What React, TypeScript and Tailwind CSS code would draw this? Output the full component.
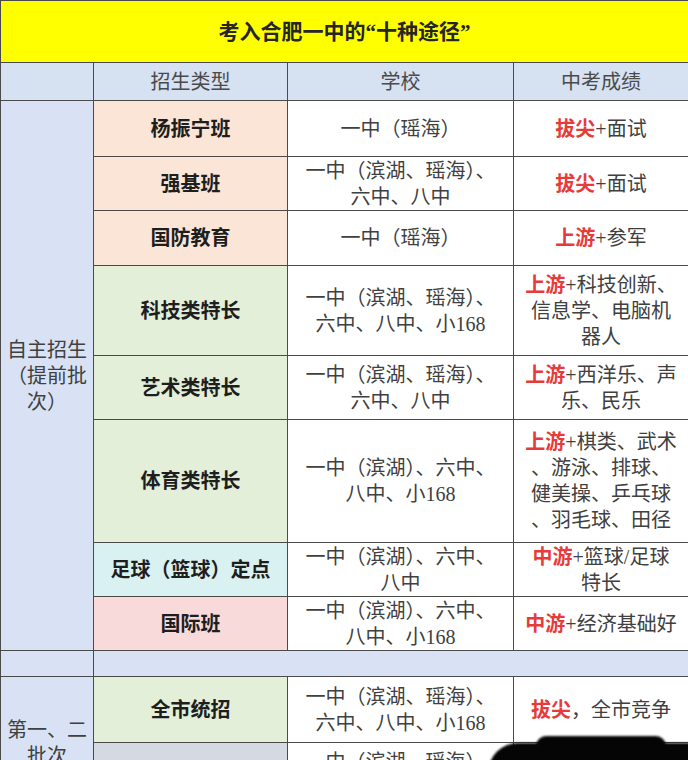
const FONT = { fontFamily: '"Liberation Serif", "Noto Sans CJK SC", serif' };

type Row = {
  kind: string;
  bg: string;
  h: string;
  school: React.ReactNode;
  red: string;
  rest: React.ReactNode;
};

const rows: Row[] = [
  { kind: "杨振宁班", bg: "bg-[#fbe5d6]", h: "h-[56px]", school: "一中（瑶海）", red: "拔尖", rest: "+面试" },
  { kind: "强基班", bg: "bg-[#fbe5d6]", h: "h-[54px]", school: <>一中（滨湖、瑶海）、<br />六中、八中</>, red: "拔尖", rest: "+面试" },
  { kind: "国防教育", bg: "bg-[#fbe5d6]", h: "h-[55px]", school: "一中（瑶海）", red: "上游", rest: "+参军" },
  { kind: "科技类特长", bg: "bg-[#e3efd9]", h: "h-[90px]", school: <>一中（滨湖、瑶海）、<br />六中、八中、小168</>, red: "上游", rest: <>+科技创新、<br />信息学、电脑机<br />器人</> },
  { kind: "艺术类特长", bg: "bg-[#e3efd9]", h: "h-[64px]", school: <>一中（滨湖、瑶海）、<br />六中、八中</>, red: "上游", rest: <>+西洋乐、声<br />乐、民乐</> },
  { kind: "体育类特长", bg: "bg-[#e3efd9]", h: "h-[123px]", school: <>一中（滨湖）、六中、<br />八中、小168</>, red: "上游", rest: <>+棋类、武术<br />、游泳、排球、<br />健美操、乒乓球<br />、羽毛球、田径</> },
  { kind: "足球（篮球）定点", bg: "bg-[#daf1f1]", h: "h-[54px]", school: <>一中（滨湖）、六中、<br />八中</>, red: "中游", rest: <>+篮球/足球<br />特长</> },
  { kind: "国际班", bg: "bg-[#f9dadb]", h: "h-[54px]", school: <>一中（滨湖）、六中、<br />八中、小168</>, red: "中游", rest: "+经济基础好" },
];

const cell = "border border-[#4a4a4a] text-center align-middle";

export default function App() {
  return (
    <div className="relative w-[688px] h-[760px] overflow-hidden bg-white" style={FONT}>
      <table className="w-[688px] table-fixed border-collapse text-[20px] leading-[26px] text-[#404040]">
        <colgroup>
          <col className="w-[93px]" />
          <col className="w-[194px]" />
          <col className="w-[226px]" />
          <col className="w-[175px]" />
        </colgroup>
        <tbody>
          <tr className="h-[62px]">
            <td colSpan={4} className={`${cell} bg-[#ffff00] font-bold text-[21px] text-[#262626]`}>
              考入合肥一中的“十种途径”
            </td>
          </tr>
          <tr className="h-[38px] bg-[#d6e1f1] text-[#4a4a4a]">
            <td className={cell}></td>
            <td className={cell}>招生类型</td>
            <td className={cell}>学校</td>
            <td className={cell}>中考成绩</td>
          </tr>
          {rows.map((r, i) => (
            <tr key={r.kind} className={r.h}>
              {i === 0 && (
                <td rowSpan={rows.length} className={`${cell} bg-[#d9e2f4] px-1`}>
                  自主招生<br />（提前批<br />次）
                </td>
              )}
              <td className={`${cell} ${r.bg} font-bold text-[#1e1e1e] text-[20px] px-1`}>{r.kind}</td>
              <td className={`${cell} px-1`}>{r.school}</td>
              <td className={`${cell} px-1`}>
                <span className="font-bold text-[#e53b3b]">{r.red}</span>
                {r.rest}
              </td>
            </tr>
          ))}
          <tr className="h-[26px] bg-[#d9e2f4]">
            <td className={cell}></td>
            <td colSpan={3} className={cell}></td>
          </tr>
          <tr className="h-[66px]">
            <td rowSpan={2} className={`${cell} bg-[#d9e2f4] px-1 align-middle`}>
              第一、二<br />批次
            </td>
            <td className={`${cell} bg-[#e3efd9] font-bold text-[#1e1e1e]`}>全市统招</td>
            <td className={`${cell} px-1`}>一中（滨湖、瑶海）、<br />六中、八中、小168</td>
            <td className={`${cell} px-1`}>
              <span className="font-bold text-[#e53b3b]">拔尖</span>，全市竞争
            </td>
          </tr>
          <tr className="h-[66px]">
            <td className={`${cell} bg-[#d4d9e2]`}></td>
            <td className={`${cell} px-1 align-top pt-[6px]`}>一中（滨湖、瑶海）、<br />六中、八中</td>
            <td className={cell}></td>
          </tr>
        </tbody>
      </table>
      <div className="absolute left-[536px] top-[736px] w-[130px] h-[40px] bg-[#050505] rounded-t-[10px] blur-[1px]" />
      <div className="absolute left-[488px] top-[743px] w-[210px] h-[30px] bg-[#050505] rounded-tl-[36px] blur-[1px]" />
    </div>
  );
}
